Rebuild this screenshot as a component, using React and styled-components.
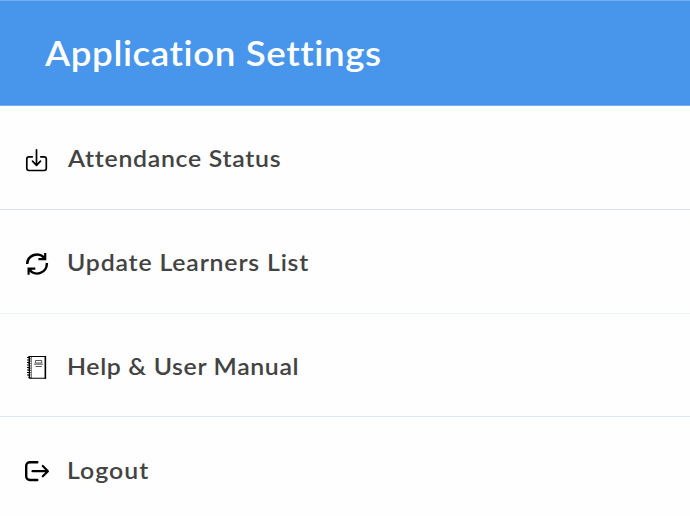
import React from "react";
import styled, { createGlobalStyle } from "styled-components";

const GlobalStyle = createGlobalStyle`
  * { box-sizing: border-box; }
  body { margin: 0; background: #fefefe; font-family: Lato, sans-serif; overflow: hidden; }
`;

const Screen = styled.main`
  width: 690px;
  height: 516px;
  display: flex;
  flex-direction: column;
  background: #fefefe;
`;

const Header = styled.header`
  height: 106px;
  flex: none;
  padding: 29px 0 0 45px;
  background: #4796eb;
  border-top: 1px solid #74b0ef;
  border-bottom: 1px solid #74b0ef;
`;

const Title = styled.h1`
  width: fit-content;
  margin: 0;
  font-size: 34px;
  line-height: 46px;
  font-weight: 600;
  letter-spacing: 0.55px;
  white-space: nowrap;
  color: #fff;
  transform: scaleX(1.08);
  transform-origin: left center;
`;

const List = styled.ul`
  margin: 0;
  padding: 0;
  list-style: none;
`;

const Row = styled.li`
  height: ${(p) => p.$height}px;
  padding: ${(p) => p.$top}px 0 0 16px;
  display: flex;
  align-items: flex-start;
  gap: 11px;
  border-bottom: 1px solid ${(p) => p.$line};
`;

const Icon = styled.svg`
  width: 40px;
  height: 40px;
  flex: none;
  fill: none;
  stroke: #000;
`;

const Label = styled.span`
  padding-top: ${(p) => p.$drop}px;
  padding-left: ${(p) => p.$indent || 0}px;
  font-size: 23px;
  line-height: 32px;
  font-weight: 600;
  letter-spacing: ${(p) => p.$tracking}px;
  white-space: nowrap;
  color: #434343;
  transform: scaleX(1.08);
  transform-origin: left center;
`;

const DownloadIcon = () => (
  <Icon viewBox="0 0 40 40" strokeWidth="1.7" strokeLinecap="round" strokeLinejoin="round">
    <path d="M16.3 16.8H13a2.2 2.2 0 0 0-2.2 2.2v9.3a2.2 2.2 0 0 0 2.2 2.2h15.1a2.2 2.2 0 0 0 2.2-2.2V19a2.2 2.2 0 0 0-2.2-2.2h-3.3" />
    <path d="M20.5 9.8v15.4M16.5 21.2l4 4.1 4-4.1" />
  </Icon>
);

const RefreshIcon = () => (
  <Icon viewBox="0 0 40 40" strokeWidth="2.5">
    <path d="M11.2 20a9.7 9.7 0 0 1 17.4-5.6M30.8 19a9.8 9.8 0 0 1-17.6 6.6" />
    <path d="M29.2 9v6.2h-6.8M12.6 30.8v-6.2h6.7" strokeWidth="2.2" />
    <path d="M29.2 11.5v3.7h-4.2zM12.6 28.3v-3.7h4.2z" fill="#000" stroke="none" />
  </Icon>
);

const ManualIcon = () => (
  <Icon viewBox="0 0 40 40">
    <path d="M13.4 9.5h16v21.7h-16z" strokeWidth="1.1" />
    <path d="M29.4 9v22.7" strokeWidth="1.5" />
    <path d="M13.5 9v22.7" strokeWidth="2.2" strokeDasharray="1.2 1.1" />
    <path d="M11 10.5h3M11 13h3M11 15.5h3M11 18h3M11 20.5h3M11 23h3M11 25.5h3M11 28h3" strokeWidth="1" />
    <path d="M15.5 9.5v22" strokeWidth=".5" />
    <path d="M19.4 13.5h6.3v2.5h-6.3zM18 17.2h9M19.6 19.5h6.2" strokeWidth=".9" stroke="#444" />
  </Icon>
);

const LogoutIcon = () => (
  <Icon viewBox="0 0 40 40" strokeWidth="2.4" strokeLinecap="round" strokeLinejoin="round">
    <path d="M21.3 11.2h-7.5a3.6 3.6 0 0 0-3.6 3.6v10.6a3.6 3.6 0 0 0 3.6 3.6h7.5" />
    <path d="M16.5 20.2h15M26.8 15l5.1 5.2-5.1 5.1" strokeWidth="2.2" />
  </Icon>
);

const items = [
  { label: "Attendance Status", icon: DownloadIcon, height: 104, top: 34, line: "#d7e2ec", tracking: 0.65, drop: 2, indent: 1 },
  { label: "Update Learners List", icon: RefreshIcon, height: 104, top: 34, line: "#ebf5fb", tracking: 0.76, drop: 2 },
  { label: "Help & User Manual", icon: ManualIcon, height: 103, top: 33, line: "#d9ebf8", tracking: 0.6, drop: 3 },
  { label: "Logout", icon: LogoutIcon, height: 99, top: 34, line: "transparent", tracking: 0.95, drop: 3 },
];

export default function App() {
  return (
    <Screen>
      <GlobalStyle />
      <Header>
        <Title>Application Settings</Title>
      </Header>
      <List>
        {items.map(({ label, icon: Glyph, height, top, line, tracking, drop, indent }) => (
          <Row key={label} $height={height} $top={top} $line={line}>
            <Glyph />
            <Label $tracking={tracking} $drop={drop} $indent={indent}>{label}</Label>
          </Row>
        ))}
      </List>
    </Screen>
  );
}
